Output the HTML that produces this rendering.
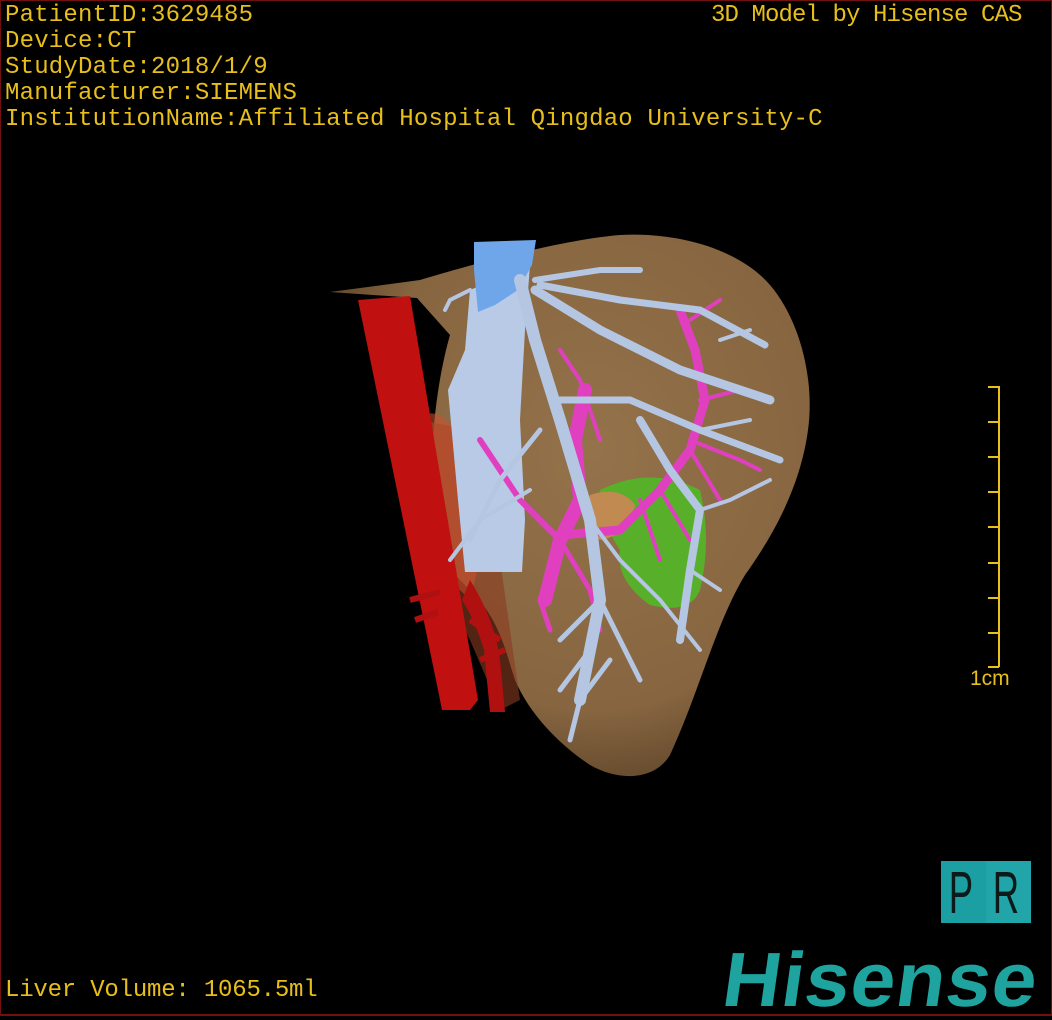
<!DOCTYPE html>
<html><head><meta charset="utf-8"><style>
html,body{margin:0;padding:0;background:#000;}
#f{position:relative;width:1052px;height:1020px;overflow:hidden;background:#000;}
#bd{position:absolute;left:0;top:0;width:1050px;height:1013px;border:1px solid #701010;border-bottom:2px solid #701010;}
.t{position:absolute;font-family:"Liberation Mono",monospace;font-size:24px;color:#e8bf1a;letter-spacing:0.2px;white-space:nowrap;line-height:26px;}
</style></head><body><div id="f">
<div id="bd"></div>
<div class="t" style="left:5px;top:3px">PatientID:3629485<br>Device:CT<br>StudyDate:2018/1/9<br>Manufacturer:SIEMENS<br>InstitutionName:Affiliated Hospital Qingdao University-C</div>
<div class="t" style="left:711px;top:3px;letter-spacing:-0.9px">3D Model by Hisense CAS</div>
<div class="t" style="left:5px;top:978px;letter-spacing:-0.2px">Liver Volume: 1065.5ml</div>
<div class="t" style="left:970px;top:666px;font-family:'Liberation Sans',sans-serif;font-size:21px;letter-spacing:0">1cm</div>
<svg style="position:absolute;left:0;top:0" width="1052" height="1020">
<defs>
<radialGradient id="lg" cx="0.55" cy="0.4" r="0.6"><stop offset="0" stop-color="#94724a"/><stop offset="0.8" stop-color="#866540"/><stop offset="1" stop-color="#6a4e30"/></radialGradient>
</defs>
<path d="M330,292 L420,280 C470,265 560,240 620,235 C680,232 740,250 770,285 C800,320 815,380 808,430 C800,490 770,540 745,575 C715,625 700,690 670,755 C655,780 620,782 590,765 C560,745 530,715 515,680 C505,650 500,620 470,590 L440,560 L432,470 C432,420 440,370 450,335 L417,298 Z" fill="url(#lg)"/>
<path d="M420,420 L470,430 L500,560 L520,700 L500,710 L470,640 L430,560 Z" fill="#8a3a20" opacity="0.6"/>
<path d="M415,420 Q440,400 460,440 L480,560 L470,600 L430,560 Z" fill="#d05030" opacity="0.55"/>
<path d="M600,490 Q650,465 700,490 Q712,540 700,590 Q690,615 650,605 Q615,580 620,550 Q600,520 600,490Z" fill="#58b02a"/>
<path d="M590,495 Q620,485 635,505 Q630,535 600,540 Q580,525 590,495Z" fill="#c08a50"/>
<path d="M358,300 L410,296 L478,700 L470,710 L442,710 L438,690 Z" fill="#c01010"/>
<path d="M470,580 Q495,620 500,660 L505,712 L490,712 L484,650 Q475,620 462,600Z" fill="#b01010"/>
<path d="M410,600 L440,592 M415,620 L438,612 M470,620 L500,640 M480,660 L505,650" stroke="#b01010" stroke-width="6"/>
<path d="M470,290 L530,265 L525,330 L520,420 L525,520 L522,572 L465,572 L458,500 L448,390 L465,350 Z" fill="#b8cae6"/>
<path d="M474,242 L536,240 L532,265 L518,290 L495,305 L478,312 L474,270 Z" fill="#6fa6ea"/>
<g fill="none" stroke="#e040c0" stroke-linecap="round">
<path d="M545,600 L560,540 L580,500 L575,440 L585,390" stroke-width="14"/>
<path d="M560,535 L620,530 L660,490 L690,450 L705,400 L695,350 L680,310" stroke-width="9"/>
<path d="M560,540 L520,500 L480,440" stroke-width="6"/>
<path d="M560,545 L540,600 L550,630" stroke-width="5"/>
<path d="M560,540 L590,590 L600,630" stroke-width="5"/>
<path d="M690,440 L740,460 L760,470 M700,400 L740,390 M690,320 L720,300 M660,490 L690,540 M640,500 L660,560 M690,450 L720,500 M600,440 L580,380 L560,350" stroke-width="4"/>
</g>
<g fill="none" stroke="#b4c6e2" stroke-linecap="round">
<path d="M520,280 L535,340 L560,420 L590,520 L600,600 L580,700" stroke-width="12"/>
<path d="M535,290 L600,330 L680,370 L770,400" stroke-width="9"/>
<path d="M540,285 L620,300 L700,310 L765,345" stroke-width="7"/>
<path d="M535,280 L600,270 L640,270" stroke-width="6"/>
<path d="M560,400 L630,400 L700,430 L780,460" stroke-width="7"/>
<path d="M640,420 L670,470 L700,510 L690,570 L680,640" stroke-width="8"/>
<path d="M590,520 L620,560 L660,600 L700,650" stroke-width="4"/>
<path d="M600,600 L620,640 L640,680 M600,600 L560,640 M580,700 L610,660 M590,650 L560,690 M580,700 L570,740" stroke-width="5"/>
<path d="M540,430 L500,480 L470,540" stroke-width="5"/>
<path d="M530,490 L480,520 L450,560" stroke-width="4"/>
<path d="M700,510 L730,500 L770,480 M690,570 L720,590 M700,430 L750,420 M720,340 L750,330 M470,290 L450,300 L445,310" stroke-width="4"/>
</g>
<g stroke="#e8c21a" stroke-width="2">
<line x1="999" y1="386" x2="999" y2="667"/>
<line x1="988" y1="387" x2="999" y2="387"/><line x1="988" y1="422" x2="999" y2="422"/><line x1="988" y1="457" x2="999" y2="457"/><line x1="988" y1="492" x2="999" y2="492"/><line x1="988" y1="527" x2="999" y2="527"/><line x1="988" y1="563" x2="999" y2="563"/><line x1="988" y1="598" x2="999" y2="598"/><line x1="988" y1="633" x2="999" y2="633"/><line x1="988" y1="667" x2="999" y2="667"/>
</g>
<rect x="941" y="861" width="45" height="62" fill="#1c9fa2"/>
<rect x="986" y="861" width="45" height="62" fill="#21a5a8"/>
<text x="0" y="913" text-anchor="middle" font-family="Liberation Sans,sans-serif" font-size="59" fill="#0c1a1a" transform="translate(961 0) scale(0.62 1)">P</text>
<text x="0" y="913" text-anchor="middle" font-family="Liberation Sans,sans-serif" font-size="59" fill="#0c1a1a" transform="translate(1006 0) scale(0.62 1)">R</text>
<text x="0" y="0" font-family="Liberation Sans,sans-serif" font-weight="bold" font-size="81" letter-spacing="1" fill="#1ea39f" transform="translate(720 1006) skewX(-8) scale(0.99 0.95)">Hisense</text>
</svg>
</div></body></html>
